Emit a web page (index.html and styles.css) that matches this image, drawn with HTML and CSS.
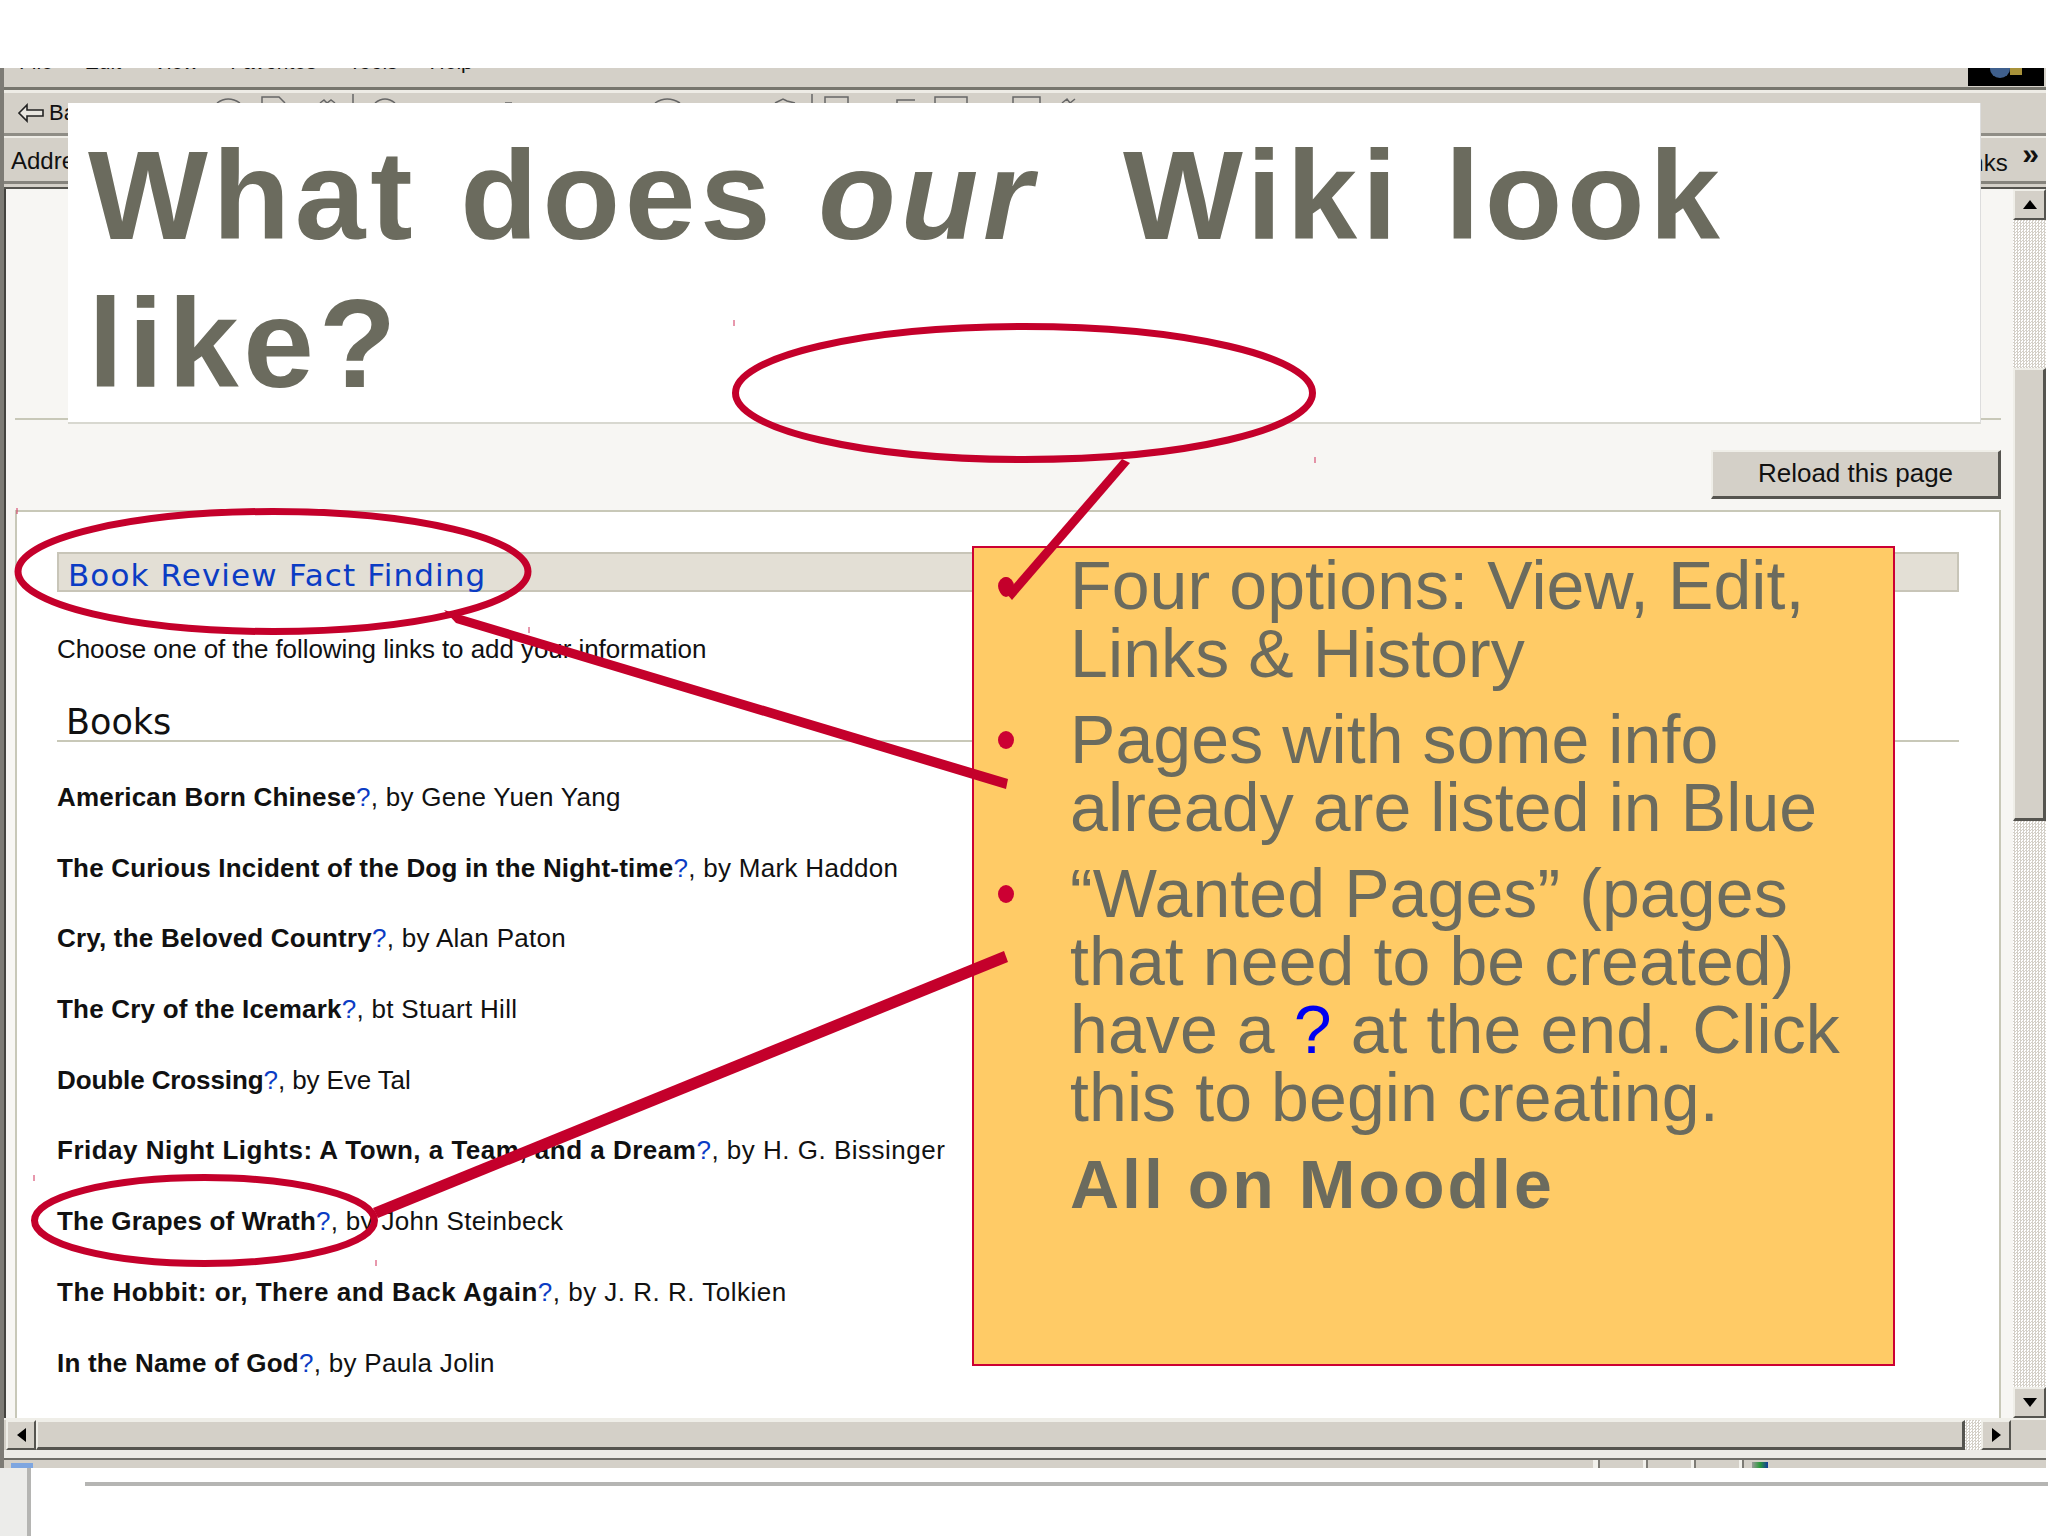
FILE: index.html
```html
<!DOCTYPE html>
<html lang="en">
<head>
<meta charset="utf-8">
<title>What does our Wiki look like?</title>
<link rel="stylesheet" href="styles.css">
</head>
<body>
<div class="slide">
  <div class="browser">
    <div class="menubar">
      <div class="menus"><span>File</span><span>Edit</span><span>View</span><span>Favorites</span><span>Tools</span><span>Help</span></div>
      <div class="logo"><svg width="76" height="18" viewBox="0 0 76 18"><ellipse cx="32" cy="1" rx="10" ry="9" fill="#3f5f8c"/><rect x="42" y="0" width="12" height="7" fill="#a8923a"/></svg></div>
    </div>
    <div class="toolbar">
      <svg class="back" width="26" height="22" viewBox="0 0 26 22"><path d="M1 11 9 3v5h16v6H9v5z" fill="#e8e6e0" stroke="#222" stroke-width="1.6"/></svg>
      <span class="back-label">Back</span>
      <svg class="slivers" width="900" height="10" viewBox="0 0 900 10"><g fill="none" stroke="#666" stroke-width="1.5"><path d="M17 9q11-8 23 0M62 9V3h17l6 6M120 9l4-3 3 3 4-3 4 3M153 9V0M175 9q10-8 20 0M305 9h7M455 9q12-8 25 0M575 9l8-4 4 2 8 2M612 9V0M625 9V3h23v6M697 9V6h18M735 9V3h32v6M813 9V3h27v6M862 9l5-4 3 4 5-4"/></g></svg>
    </div>
    <div class="addressbar">
      <span class="address-label">Address</span>
      <span class="links">Links <b class="chevrons">»</b></span>
    </div>
    <div class="main">
      <div class="page">
        <hr class="page-rule">
        <div class="reload-row"><button class="reload">Reload this page</button></div>
        <div class="box">
          <h1 class="heading">Book Review Fact Finding</h1>
          <p class="intro">Choose one of the following links to add your information</p>
          <h2 class="section">Books</h2>
          <p class="book"><b>American Born Chinese</b><a>?</a>, by Gene Yuen Yang</p>
          <p class="book"><b>The Curious Incident of the Dog in the Night-time</b><a>?</a>, by Mark Haddon</p>
          <p class="book"><b>Cry, the Beloved Country</b><a>?</a>, by Alan Paton</p>
          <p class="book"><b>The Cry of the Icemark</b><a>?</a>, bt Stuart Hill</p>
          <p class="book book-tight"><b>Double Crossing</b><a>?</a>, by Eve Tal</p>
          <p class="book book-wide"><b>Friday Night Lights: A Town, a Team, and a Dream</b><a>?</a>, by H. G. Bissinger</p>
          <p class="book"><b>The Grapes of Wrath</b><a>?</a>, by John Steinbeck</p>
          <p class="book book-wide"><b>The Hobbit: or, There and Back Again</b><a>?</a>, by J. R. R. Tolkien</p>
          <p class="book"><b>In the Name of God</b><a>?</a>, by Paula Jolin</p>
        </div>
      </div>
      <div class="vscroll">
        <div class="sbtn sbtn-v"><i class="tri tri-up"></i></div>
        <div class="track track-top"></div>
        <div class="thumb-v"></div>
        <div class="track track-bottom"></div>
        <div class="sbtn sbtn-v"><i class="tri tri-down"></i></div>
      </div>
    </div>
    <div class="hscroll">
      <div class="sbtn sbtn-h"><i class="tri tri-left"></i></div>
      <div class="thumb-h"></div>
      <div class="track track-h"></div>
      <div class="sbtn sbtn-h"><i class="tri tri-right"></i></div>
      <div class="corner"></div>
    </div>
    <div class="status-gap"></div>
    <div class="statusbar">
      <i class="doc-icon"></i>
      <i class="cell cell-main"></i><i class="cell cell-small"></i><i class="cell cell-small"></i><i class="cell cell-small"></i>
      <i class="cell cell-zone"><i class="zone-icon"></i></i>
    </div>
  </div>
  <div class="footer">
    <div class="footer-side"></div>
    <div class="footer-line"></div>
  </div>

  <div class="title">What does <em>our</em>&nbsp; Wiki look like?</div>

  <div class="callout">
    <ul class="points">
      <li class="point"><i class="dot"></i><span>Four options: View, Edit, Links &amp; History</span></li>
      <li class="point"><i class="dot"></i><span>Pages with some info already are listed in Blue</span></li>
      <li class="point"><i class="dot"></i><span>“Wanted Pages” (pages that need to be created) have a <span class="mark">?</span> at the end. Click this to begin creating.</span></li>
    </ul>
    <p class="moodle">All on Moodle</p>
  </div>

  <svg class="notes" width="2048" height="1536" viewBox="0 0 2048 1536">
    <g fill="none" stroke="#c4002b" stroke-width="7">
      <ellipse cx="1024" cy="393" rx="288.500" ry="66.500"/>
      <ellipse cx="273" cy="571.500" rx="255" ry="60"/>
      <ellipse cx="204.500" cy="1220.500" rx="170" ry="43"/>
    </g>
    <g fill="#c4002b">
      <path d="M1122 459 1130 463 1012 600 1006 593z"/>
      <ellipse cx="1006" cy="587" rx="7" ry="10"/>
      <path d="M444 610 1008 779 1006 789 456 623z"/>
      <path d="M373 1208 1004 951 1008 962 378 1218z"/>
    </g>
    <g stroke="#d0305a" stroke-width="1">
      <path d="M734 320v6M1315 457v6M17 508v6M529 627v6M34 1175v6M376 1260v6"/>
    </g>
  </svg>
</div>
</body>
</html>
```

FILE: styles.css
```css
* { box-sizing: border-box; }
html, body { margin: 0; padding: 0; background: #fff; }

.slide {
  position: relative;
  width: 2048px;
  height: 1536px;
  padding-top: 68px;
  overflow: hidden;
  background: #fff;
  font-family: "Liberation Sans", Arial, sans-serif;
}

/* Browser window */
.browser {
  width: 2046px;
  height: 1400px;
  display: flex;
  flex-direction: column;
  background: #d4d0c8;
  border-left: 4px solid #7d7b75;
}
.menubar {
  height: 22px;
  display: flex;
  justify-content: space-between;
  border-bottom: 3px solid #77766e;
  overflow: hidden;
}
.menus {
  display: flex;
  gap: 32px;
  padding-left: 15px;
  margin-top: -17px;
  font-size: 21px;
  line-height: 22px;
  color: #111;
}
.logo { width: 76px; height: 18px; margin-right: 2px; background: #000; }
.logo svg { display: block; }
.toolbar {
  height: 46px;
  display: flex;
  align-items: flex-start;
  border-top: 3px solid #eeece6;
  border-bottom: 3px solid #8f8d86;
}
.back { margin: 9px 0 0 14px; }
.back-label { margin: 7px 0 0 5px; font-size: 22px; line-height: 26px; color: #111; }
.slivers { position: absolute; left: 200px; top: 94px; }
.addressbar {
  height: 48px;
  display: flex;
  justify-content: space-between;
  align-items: center;
  padding: 2px 7px 0 7px;
  border-top: 2px solid #eeece6;
  border-bottom: 3px solid #85837c;
  font-size: 24px;
  color: #111;
}
.chevrons { position: relative; top: -7px; margin-left: 8px; font-size: 30px; }

.main { height: 1231px; margin-top: 3px; display: flex; overflow: hidden; border-top: 2px solid #55544f; }
.page {
  flex: 1;
  padding: 0 12px 0 9px;
  overflow: hidden;
  background: #f7f6f3;
  border-left: 2px solid #44433f;
}
.page-rule { height: 2px; margin: 229px 0 0; border: 0; background: #c8c8b8; }
.reload-row { display: flex; justify-content: flex-end; margin-top: 30px; }
.reload {
  width: 290px;
  height: 49px;
  padding-bottom: 3px;
  background: #d4d0c8;
  border: 0;
  border-right: 3px solid #55544f;
  border-bottom: 3px solid #55544f;
  border-top: 2px solid #efeee8;
  border-left: 2px solid #efeee8;
  font-family: "Liberation Sans", Arial, sans-serif;
  font-size: 26px;
  color: #111;
}
.box {
  height: 1000px;
  margin-top: 11px;
  padding: 40px 40px 0 40px;
  background: #fff;
  border: 2px solid #c8c8b8;
}
.heading {
  height: 40px;
  margin: 0;
  padding-left: 9px;
  background: #e3dfd5;
  border: 2px solid #c8c5b8;
  font-family: "DejaVu Sans", sans-serif;
  font-size: 31px;
  font-weight: 400;
  line-height: 42px;
  letter-spacing: 1.1px;
  color: #0b3cc4;
}
.intro { margin: 42px 0 0; font-size: 26px; line-height: 30px; letter-spacing: -0.07px; color: #111; }
.section {
  height: 52px;
  margin: 26px 0 40px;
  padding-left: 9px;
  border-bottom: 2px solid #c8c8b8;
  font-family: "DejaVu Sans", sans-serif;
  font-size: 35px;
  font-weight: 400;
  line-height: 64px;
  color: #111;
}
.book { height: 70.7px; margin: 0; font-size: 26px; line-height: 30px; color: #111; letter-spacing: 0.3px; }
.book b { letter-spacing: 0.2px; }
.book a { color: #0b3cc4; }
.book-wide, .book-wide b { letter-spacing: 0.5px; }
.book-tight, .book-tight b { letter-spacing: -0.1px; }

/* Scrollbars */
.vscroll { width: 33px; display: flex; flex-direction: column; }
.sbtn {
  display: flex;
  align-items: center;
  justify-content: center;
  background: #d4d0c8;
  border: 2px solid #efeee8;
  border-right-color: #55544f;
  border-bottom-color: #55544f;
  flex: none;
}
.sbtn-v { height: 31px; }
.sbtn-h { width: 30px; height: 30px; }
.track { background: repeating-conic-gradient(#d4d0c8 0 25%, #fff 0 50%) 0 0 / 3px 3px; }
.track-top { height: 148px; }
.track-bottom { flex: 1; }
.track-h { width: 16px; }
.thumb-v {
  height: 453px;
  background: #d4d0c8;
  border: 2px solid #efeee8;
  border-right: 3px solid #55544f;
  border-bottom: 3px solid #55544f;
}
.tri { width: 0; height: 0; border: 0 solid transparent; }
.tri-up { border-width: 0 7px 9px; border-bottom-color: #000; }
.tri-down { border-width: 9px 7px 0; border-top-color: #000; }
.tri-left { border-width: 7px 9px 7px 0; border-right-color: #000; }
.tri-right { border-width: 7px 0 7px 9px; border-left-color: #000; }

.hscroll { height: 32px; display: flex; align-items: stretch; padding-left: 2px; border-top: 2px solid #efeee8; }
.thumb-h {
  width: 1929px;
  background: #d4d0c8;
  border: 2px solid #efeee8;
  border-right: 3px solid #55544f;
  border-bottom: 3px solid #55544f;
}
.corner { flex: 1; }
.status-gap { height: 8px; background: #ecebe6; }
.statusbar { flex: 1; display: flex; border-top: 2px solid #6f6e68; overflow: hidden; position: relative; }
.doc-icon { width: 22px; height: 6px; margin: 3px 0 0 7px; background: #7ea6e0; }
.cell { height: 10px; border-left: 2px solid #7d7b75; box-shadow: -3px 0 0 #f2f1ec; }
.cell-main { margin-left: 1563px; width: 0; }
.cell-small { width: 48px; }
.cell-zone { flex: 1; padding-left: 8px; }
.zone-icon { display: block; width: 16px; height: 6px; margin-top: 2px; background: linear-gradient(90deg, #999, #2a9a3a 50%, #123a9a); }

/* Footer of the slide */
.footer { position: relative; height: 68px; background: #fff; }
.footer-side { width: 31px; height: 68px; background: #ececea; border-right: 4px solid #b5b5b3; }
.footer-line { position: absolute; left: 85px; right: 0; top: 14px; height: 4px; background: #b5b5b3; }

/* Title panel */
.title {
  position: absolute;
  left: 68px;
  top: 103px;
  width: 1913px;
  height: 321px;
  padding: 18px 20px 0 20px;
  background: #fff;
  border-right: 1px solid #ddd;
  border-bottom: 2px solid #d8d8d0;
  font-size: 127px;
  font-weight: 700;
  line-height: 148px;
  letter-spacing: 4.7px;
  word-spacing: 3px;
  color: #6b6b5e;
}
.title em { font-style: italic; }

/* Callout */
.callout {
  position: absolute;
  left: 972px;
  top: 546px;
  width: 923px;
  height: 820px;
  padding: 0 30px 0 24px;
  background: #ffcb66;
  border: 2px solid #cc0033;
  color: #6b6b5e;
  font-size: 68px;
  line-height: 68px;
  letter-spacing: 0.1px;
}
.points { margin: 0; padding: 3px 0 0; list-style: none; }
.point { display: flex; gap: 56px; margin-bottom: 18px; }
.dot { flex: none; width: 16px; height: 18px; margin-top: 26px; border-radius: 50%; background: #cc0033; }
.mark { color: #0000f0; }
.moodle { margin: 0 0 0 72px; padding-top: 1px; font-size: 68px; font-weight: 700; letter-spacing: 3px; }

.notes { position: absolute; left: 0; top: 0; pointer-events: none; }
```
